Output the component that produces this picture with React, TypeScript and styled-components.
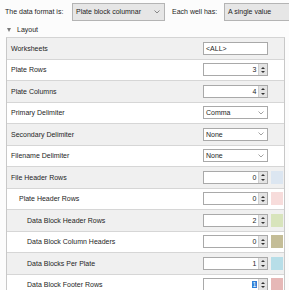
import React from "react";
import styled, { createGlobalStyle } from "styled-components";

const GlobalStyle = createGlobalStyle`
  html, body {
    margin: 0;
    padding: 0;
    background: #fcfcfc;
    font-family: "Liberation Sans", Arial, sans-serif;
    font-size: 7px;
    color: #1e1e1e;
  }
`;

const Panel = styled.div`
  width: 289px;
  height: 290px;
  overflow: hidden;
`;

const TopBar = styled.div`
  display: flex;
  align-items: center;
  height: 22px;
  padding-left: 5px;
  white-space: nowrap;
`;

const TopLabel = styled.span<{ width: number }>`
  width: ${(p) => p.width}px;
  flex: none;
`;

const ComboBox = styled.div<{ width: number }>`
  flex: none;
  box-sizing: border-box;
  width: ${(p) => p.width}px;
  height: 18px;
  margin-top: 1px;
  border: 1px solid #b4b4b4;
  background: #e6e6e6;
  display: flex;
  align-items: center;
  padding: 0 4px 0 3px;
`;

const ComboText = styled.span`
  flex: 1;
`;

const Chevron = ({ color = "#6d6d6d" }: { color?: string }) => (
  <svg width="6" height="4" viewBox="0 0 6 4">
    <path d="M0.5 0.5 L3 3 L5.5 0.5" fill="none" stroke={color} strokeWidth="0.8" />
  </svg>
);

const SectionHeader = styled.div`
  display: flex;
  align-items: center;
  height: 15px;
  padding-left: 7px;
  gap: 6px;
`;

const Triangle = styled.span`
  width: 0;
  height: 0;
  border-left: 2.5px solid transparent;
  border-right: 2.5px solid transparent;
  border-top: 4px solid #7a7a7a;
`;

const Grid = styled.div`
  box-sizing: border-box;
  margin-left: 6px;
  width: 279px;
  border-left: 1px solid #c8c8c8;
  border-right: 1px solid #c8c8c8;
  border-top: 1px solid #d4d4d4;
`;

const Row = styled.div<{ shaded: boolean }>`
  display: flex;
  align-items: center;
  box-sizing: border-box;
  height: 21.5px;
  border-bottom: 1px solid #d6d6d6;
  background: ${(p) => (p.shaded ? "#f0f0f0" : "#ffffff")};
`;

const Label = styled.div<{ indent: number }>`
  width: 196px;
  flex: none;
  box-sizing: border-box;
  padding-left: ${(p) => 4 + p.indent * 8}px;
  white-space: nowrap;
`;

const Field = styled.div`
  box-sizing: border-box;
  width: 65px;
  height: 13px;
  flex: none;
  border: 1px solid #a9a9a9;
  background: #ffffff;
  display: flex;
  align-items: center;
`;

const TextValue = styled.span`
  padding-left: 2px;
`;

const NumberValue = styled.span<{ selected?: boolean }>`
  flex: 1;
  text-align: right;
  padding-right: 1px;
  & > span {
    padding: 0 0.5px;
    background: ${(p) => (p.selected ? "#2f7fd8" : "transparent")};
    color: ${(p) => (p.selected ? "#ffffff" : "inherit")};
  }
`;

const Spinner = styled.div`
  width: 9px;
  height: 11px;
  flex: none;
  background: #e4e4e4;
  border-left: 1px solid #cfcfcf;
  display: flex;
  flex-direction: column;
  align-items: center;
  justify-content: space-around;
  padding: 1px 0;
  box-sizing: border-box;
`;

const Arrow = styled.span<{ up?: boolean }>`
  width: 0;
  height: 0;
  border-left: 2px solid transparent;
  border-right: 2px solid transparent;
  ${(p) => (p.up ? "border-bottom: 2.5px solid #333;" : "border-top: 2.5px solid #333;")}
`;

const DropField = styled(Field)`
  justify-content: space-between;
  padding-right: 3px;
`;

const SwatchSlot = styled.div`
  width: 16px;
  flex: none;
  display: flex;
  padding-left: 3px;
  box-sizing: border-box;
`;

const Swatch = styled.div<{ color: string }>`
  width: 12px;
  height: 13px;
  background: ${(p) => p.color};
`;

type RowDef = {
  label: string;
  indent: number;
  kind: "text" | "number" | "drop";
  value: string;
  swatch?: string;
  selected?: boolean;
};

const rows: RowDef[] = [
  { label: "Worksheets", indent: 0, kind: "text", value: "<ALL>" },
  { label: "Plate Rows", indent: 0, kind: "number", value: "3" },
  { label: "Plate Columns", indent: 0, kind: "number", value: "4" },
  { label: "Primary Delimiter", indent: 0, kind: "drop", value: "Comma" },
  { label: "Secondary Delimiter", indent: 0, kind: "drop", value: "None" },
  { label: "Filename Delimiter", indent: 0, kind: "drop", value: "None" },
  { label: "File Header Rows", indent: 0, kind: "number", value: "0", swatch: "#dce6f1" },
  { label: "Plate Header Rows", indent: 1, kind: "number", value: "0", swatch: "#f7dcdb" },
  { label: "Data Block Header Rows", indent: 2, kind: "number", value: "2", swatch: "#d8e4bc" },
  { label: "Data Block Column Headers", indent: 2, kind: "number", value: "0", swatch: "#c4bd97" },
  { label: "Data Blocks Per Plate", indent: 2, kind: "number", value: "1", swatch: "#b7dee8" },
  { label: "Data Block Footer Rows", indent: 2, kind: "number", value: "1", swatch: "#e6b8b7", selected: true },
];

function Control({ row }: { row: RowDef }) {
  if (row.kind === "text") {
    return (
      <Field>
        <TextValue>{row.value}</TextValue>
      </Field>
    );
  }
  if (row.kind === "drop") {
    return (
      <DropField>
        <TextValue>{row.value}</TextValue>
        <Chevron color="#8a8a8a" />
      </DropField>
    );
  }
  return (
    <Field>
      <NumberValue selected={row.selected}>
        <span>{row.value}</span>
      </NumberValue>
      <Spinner>
        <Arrow up />
        <Arrow />
      </Spinner>
    </Field>
  );
}

export default function App() {
  return (
    <Panel>
      <GlobalStyle />
      <TopBar>
        <TopLabel width={67}>The data format is:</TopLabel>
        <ComboBox width={93}>
          <ComboText>Plate block columnar</ComboText>
          <Chevron />
        </ComboBox>
        <TopLabel width={52} style={{ marginLeft: 7 }}>Each well has:</TopLabel>
        <ComboBox width={90}>
          <ComboText>A single value</ComboText>
        </ComboBox>
      </TopBar>
      <SectionHeader>
        <Triangle />
        <span>Layout</span>
      </SectionHeader>
      <Grid>
        {rows.map((row, i) => (
          <Row key={row.label} shaded={i % 2 === 0}>
            <Label indent={row.indent}>{row.label}</Label>
            <Control row={row} />
            <SwatchSlot>{row.swatch && <Swatch color={row.swatch} />}</SwatchSlot>
          </Row>
        ))}
      </Grid>
    </Panel>
  );
}
